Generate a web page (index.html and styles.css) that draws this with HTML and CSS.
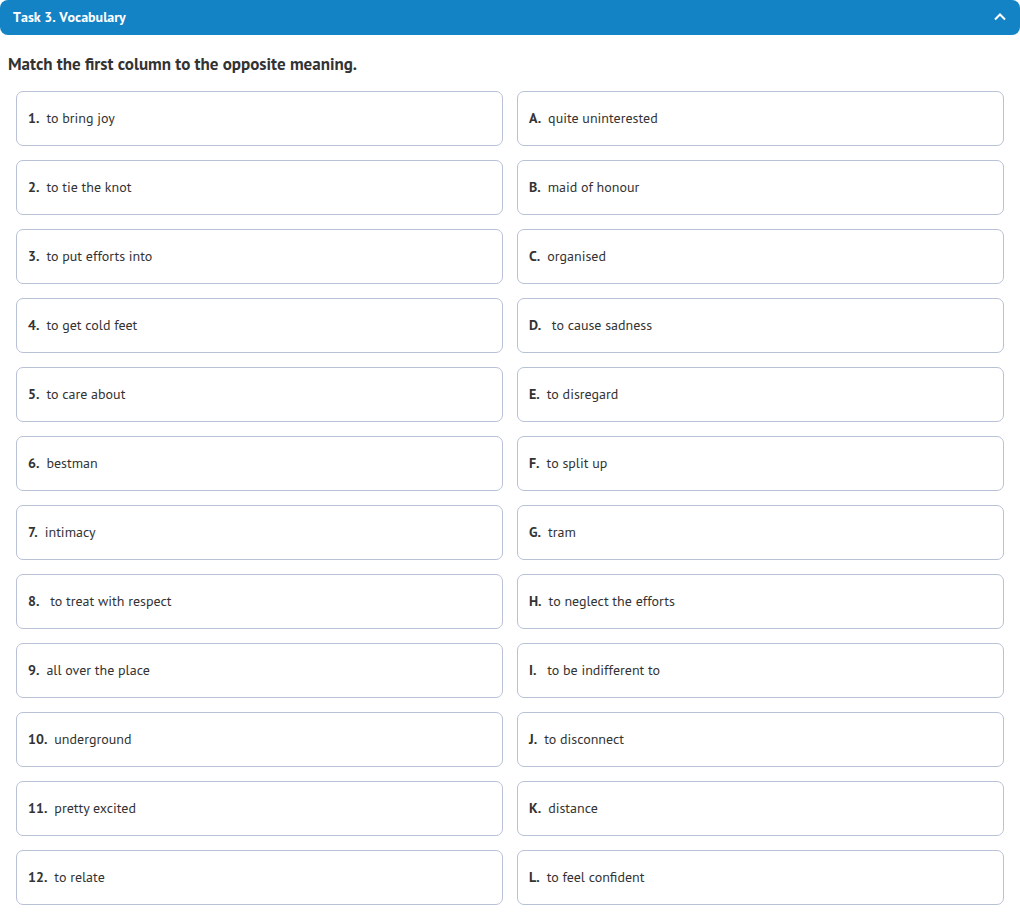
FILE: index.html
```html
<!DOCTYPE html>
<html lang="en">
<head>
<meta charset="utf-8">
<title>Task 3. Vocabulary</title>
<link rel="stylesheet" href="styles.css">
</head>
<body>
<section class="task">
  <button class="task-header" type="button" aria-expanded="true">
    <span>Task 3. Vocabulary</span>
    <svg class="chevron" viewBox="0 0 12 8" aria-hidden="true"><path d="M1 6.5 6 1.5l5 5"/></svg>
  </button>
  <h1 class="task-title">Match the first column to the opposite meaning.</h1>
  <div class="columns">
    <ul class="column">
      <li class="card"><b>1.</b><span>to bring joy</span></li>
      <li class="card"><b>2.</b><span>to tie the knot</span></li>
      <li class="card"><b>3.</b><span>to put efforts into</span></li>
      <li class="card"><b>4.</b><span>to get cold feet</span></li>
      <li class="card"><b>5.</b><span>to care about</span></li>
      <li class="card"><b>6.</b><span>bestman</span></li>
      <li class="card"><b>7.</b><span>intimacy</span></li>
      <li class="card"><b>8.</b><span>&nbsp;to treat with respect</span></li>
      <li class="card"><b>9.</b><span>all over the place</span></li>
      <li class="card"><b>10.</b><span>underground</span></li>
      <li class="card"><b>11.</b><span>pretty excited</span></li>
      <li class="card"><b>12.</b><span>to relate</span></li>
    </ul>
    <ul class="column">
      <li class="card"><b>A.</b><span>quite uninterested</span></li>
      <li class="card"><b>B.</b><span>maid of honour</span></li>
      <li class="card"><b>C.</b><span>organised</span></li>
      <li class="card"><b>D.</b><span>&nbsp;to cause sadness</span></li>
      <li class="card"><b>E.</b><span>to disregard</span></li>
      <li class="card"><b>F.</b><span>to split up</span></li>
      <li class="card"><b>G.</b><span>tram</span></li>
      <li class="card"><b>H.</b><span>to neglect the efforts</span></li>
      <li class="card"><b>I.</b><span>&nbsp;to be indifferent to</span></li>
      <li class="card"><b>J.</b><span>to disconnect</span></li>
      <li class="card"><b>K.</b><span>distance</span></li>
      <li class="card"><b>L.</b><span>to feel confident</span></li>
    </ul>
  </div>
</section>
</body>
</html>
```
FILE: styles.css
```css
* { box-sizing: border-box; }
body {
  margin: 0;
  background: #fff;
  color: #333;
  font-family: "PT Sans", "Noto Sans", sans-serif;
  font-size: 14px;
}
.task-header {
  display: flex;
  align-items: center;
  justify-content: space-between;
  width: 100%;
  height: 35px;
  padding: 0 14px 2px 13px;
  border: 0;
  border-radius: 8px;
  background: #1483c6;
  color: #fff;
  font: bold 14px "PT Sans", "Open Sans", sans-serif;
  font-kerning: none;
}
.chevron {
  width: 12px;
  height: 8px;
  fill: none;
  stroke: #fff;
  stroke-width: 2;
}
.task-title {
  margin: 17px 8px 15px;
  font: bold 17px/24px "PT Sans", "Open Sans", sans-serif;
}
.columns {
  display: grid;
  grid-template-columns: 1fr 1fr;
  gap: 14px;
  padding: 0 16px 16px;
}
.column {
  display: grid;
  gap: 14px;
  margin: 0;
  padding: 0;
  list-style: none;
}
.card {
  display: flex;
  align-items: center;
  gap: 7px;
  min-height: 55px;
  padding: 0 11px 1px;
  border: 1px solid #b9c1d6;
  border-radius: 7px;
}
```
